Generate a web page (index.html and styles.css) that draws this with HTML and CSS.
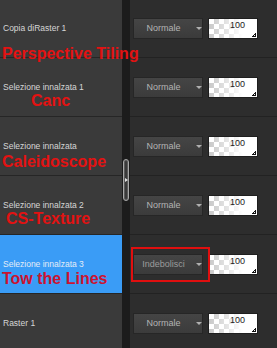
FILE: index.html
```html
<!DOCTYPE html>
<html lang="it">
<head>
<meta charset="utf-8">
<title>Livelli</title>
<link rel="stylesheet" href="styles.css">
</head>
<body>
<div class="panel">
  <div class="rows">
    <div class="row">
      <div class="name">Copia diRaster 1</div>
      <div class="gutter"></div>
      <div class="controls">
        <div class="blend"><span class="blend-label">Normale</span><span class="caret"></span></div>
        <div class="opacity"><span class="value">100</span><span class="grip"></span></div>
      </div>
    </div>
    <div class="row">
      <div class="name">Selezione innalzata 1</div>
      <div class="gutter"></div>
      <div class="controls">
        <div class="blend"><span class="blend-label">Normale</span><span class="caret"></span></div>
        <div class="opacity"><span class="value">100</span><span class="grip"></span></div>
      </div>
    </div>
    <div class="row">
      <div class="name">Selezione innalzata</div>
      <div class="gutter"></div>
      <div class="controls">
        <div class="blend"><span class="blend-label">Normale</span><span class="caret"></span></div>
        <div class="opacity"><span class="value">100</span><span class="grip"></span></div>
      </div>
    </div>
    <div class="row">
      <div class="name">Selezione innalzata 2</div>
      <div class="gutter"></div>
      <div class="controls">
        <div class="blend"><span class="blend-label">Normale</span><span class="caret"></span></div>
        <div class="opacity"><span class="value">100</span><span class="grip"></span></div>
      </div>
    </div>
    <div class="row row-selected">
      <div class="name">Selezione innalzata 3</div>
      <div class="gutter"></div>
      <div class="controls">
        <div class="blend"><span class="blend-label blend-label-dim">Indebolisci</span><span class="caret"></span></div>
        <div class="opacity"><span class="value">100</span><span class="grip"></span></div>
      </div>
    </div>
    <div class="row">
      <div class="name">Raster 1</div>
      <div class="gutter"></div>
      <div class="controls">
        <div class="blend"><span class="blend-label">Normale</span><span class="caret"></span></div>
        <div class="opacity"><span class="value">100</span><span class="grip"></span></div>
      </div>
    </div>
  </div>

  <div class="handle"></div>
  <div class="highlight"></div>

  <div class="annot annot-1">Perspective Tiling</div>
  <div class="annot annot-2">Canc</div>
  <div class="annot annot-3">Caleidoscope</div>
  <div class="annot annot-4">CS-Texture</div>
  <div class="annot annot-5">Tow the Lines</div>
</div>
</body>
</html>
```

FILE: styles.css
```css
html, body {
  margin: 0;
  padding: 0;
  width: 277px;
  height: 348px;
  overflow: hidden;
  background: #2d2d2d;
}

.panel {
  position: relative;
  width: 277px;
  height: 348px;
  overflow: hidden;
  font-family: "Liberation Sans", Arial, sans-serif;
}

.rows {
  margin-top: -1px;
  display: flex;
  flex-direction: column;
}

.row {
  display: flex;
  height: 59px;
}

.name {
  width: 122px;
  box-sizing: border-box;
  display: flex;
  align-items: center;
  padding-left: 3px;
  background: #3a3a3a;
  border-bottom: 1px solid #262626;
  color: #d6d6d6;
  font-size: 8.5px;
  white-space: nowrap;
}

.row-selected .name {
  background: #3a9cf6;
  border-bottom-color: #262626;
  color: #e4ecf6;
}

.gutter {
  width: 8px;
  background: #1c1c1c;
}

.controls {
  flex: 1;
  box-sizing: border-box;
  display: flex;
  align-items: center;
  gap: 5px;
  padding-left: 3px;
  background: #2d2d2d;
  border-bottom: 1px solid #222222;
}

.blend {
  width: 70px;
  height: 21px;
  box-sizing: border-box;
  display: flex;
  align-items: center;
  background: linear-gradient(#454545, #3b3b3b);
  border: 1px solid #262626;
}

.blend-label {
  width: 59px;
  text-align: center;
  color: #b4b4b4;
  font-size: 9px;
}

.blend-label-dim {
  color: #9c9c9c;
}

.caret {
  width: 0;
  height: 0;
  margin-left: 3px;
  border-left: 3px solid transparent;
  border-right: 3px solid transparent;
  border-top: 3px solid #b0b0b0;
}

.opacity {
  position: relative;
  width: 50px;
  height: 21px;
  box-sizing: border-box;
  border: 1px solid #1e1e1e;
  background:
    linear-gradient(to right, rgba(255,255,255,0) 0%, rgba(255,255,255,0.4) 30%, #ffffff 70%),
    repeating-conic-gradient(#c9c9c9 0% 25%, #ffffff 0% 50%) 0 0 / 10px 10px;
  text-align: right;
}

.value {
  display: block;
  padding-right: 12px;
  padding-top: 1px;
  color: #222222;
  font-size: 9px;
  line-height: 10px;
}

.grip {
  position: absolute;
  right: 1px;
  bottom: 1px;
  width: 4px;
  height: 4px;
  background: linear-gradient(135deg, transparent 45%, #111111 45%, #111111 60%, transparent 60%, transparent 100%),
              linear-gradient(#111, #111) 0 100% / 100% 1px no-repeat,
              linear-gradient(#111, #111) 100% 0 / 1px 100% no-repeat;
}

.handle {
  position: absolute;
  left: 123px;
  top: 159px;
  width: 6px;
  height: 42px;
  box-sizing: border-box;
  border: 1px solid #a9a9a9;
  border-radius: 3px;
  background: #3a3a3a;
  box-shadow: inset 0 0 0 1px #5a5a5a;
}

.handle::after {
  content: "";
  position: absolute;
  left: 1px;
  top: 18px;
  width: 0;
  height: 0;
  border-top: 2.5px solid transparent;
  border-bottom: 2.5px solid transparent;
  border-left: 3px solid #e0e0e0;
}

.highlight {
  position: absolute;
  left: 131px;
  top: 247px;
  width: 79px;
  height: 35px;
  box-sizing: border-box;
  border: 2px solid #e00f0f;
}

.annot {
  position: absolute;
  font-family: "Liberation Sans", Arial, sans-serif;
  font-weight: bold;
  font-size: 16px;
  line-height: 18px;
  color: #e31212;
  white-space: nowrap;
}

.annot-1 { left: 2px; top: 45px; }
.annot-2 { left: 31px; top: 92px; }
.annot-3 { left: 2px; top: 153px; }
.annot-4 { left: 6px; top: 210px; }
.annot-5 { left: 2px; top: 270px; color: #cc1230; }
```
